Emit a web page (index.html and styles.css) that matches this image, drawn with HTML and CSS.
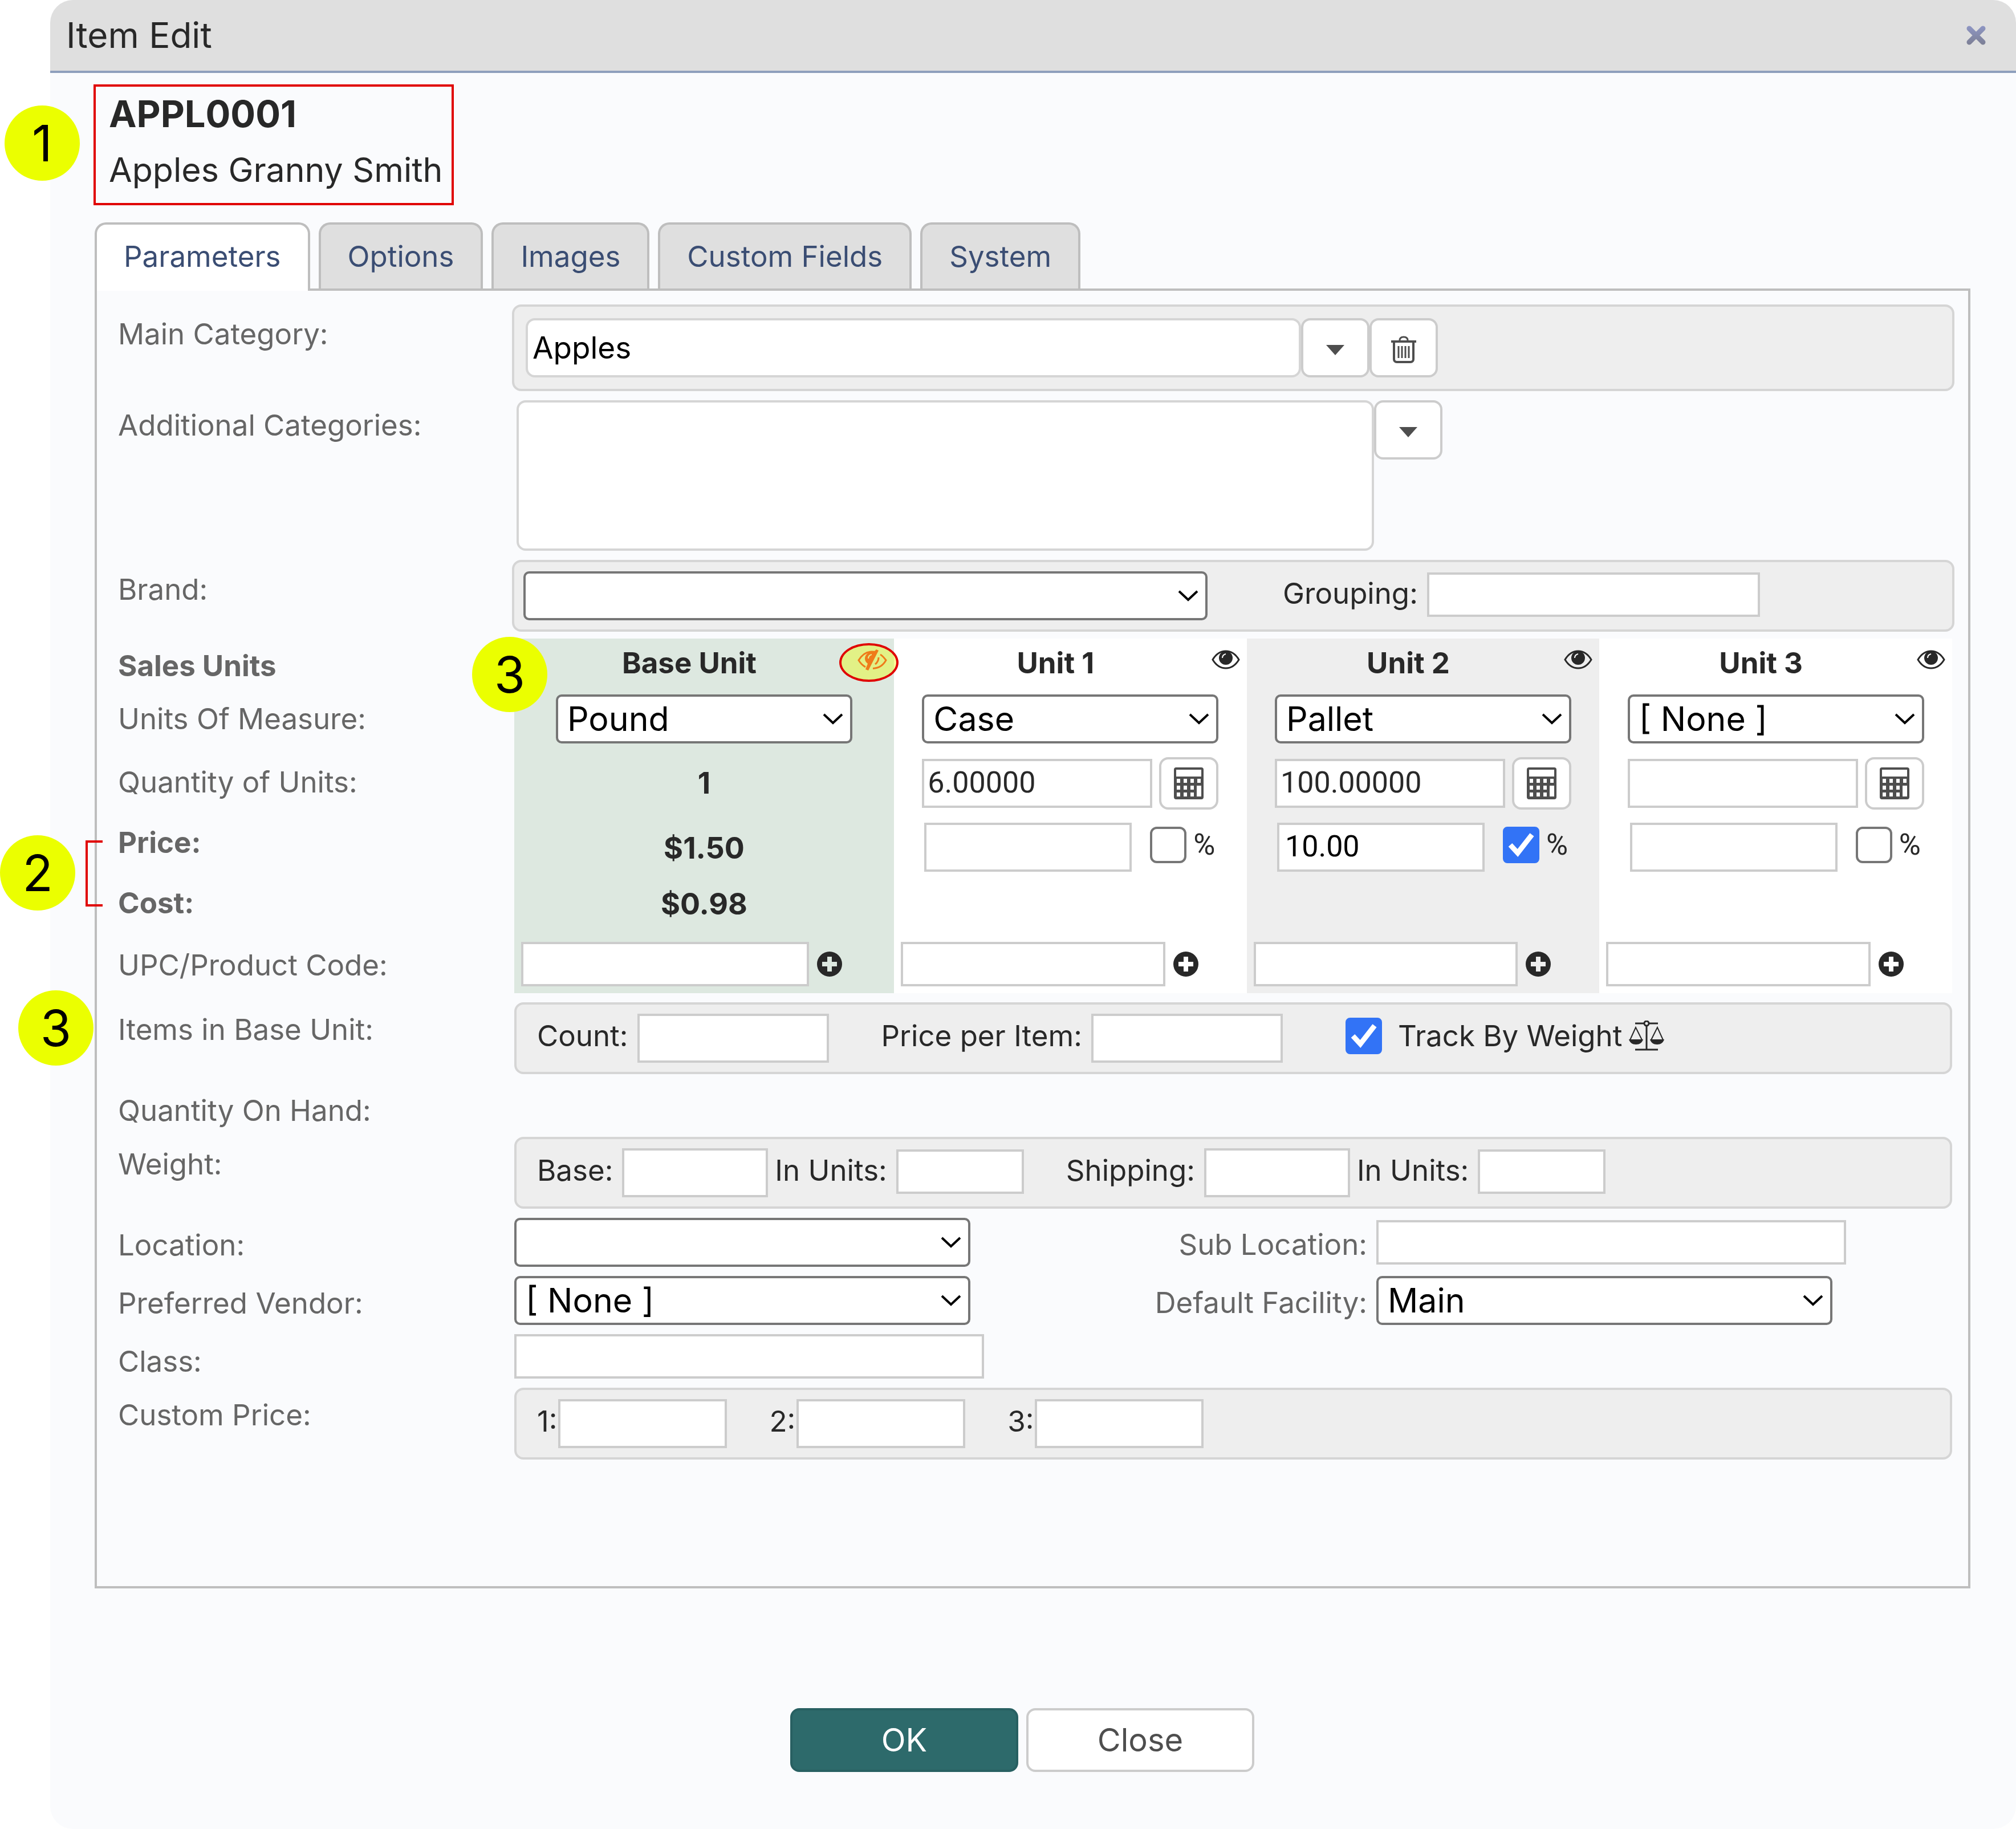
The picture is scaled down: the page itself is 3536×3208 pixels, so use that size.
FILE: index.html
```html
<!DOCTYPE html>
<html lang="en">
<head>
<meta charset="utf-8">
<meta name="viewport" content="width=device-width, initial-scale=1">
<title>Item Edit</title>
<link rel="stylesheet" href="styles.css">
</head>
<body>
<svg class="sprite" aria-hidden="true">
  <defs>
    <linearGradient id="close-fill" gradientUnits="userSpaceOnUse" x1="0" y1="0" x2="0" y2="34">
      <stop offset="0" stop-color="#8e96c4"/>
      <stop offset="1" stop-color="#7c7f94"/>
    </linearGradient>
    <symbol id="i-caret" viewBox="0 0 32 18"><path d="M0 0h32L16 18z" fill="currentColor"/></symbol>
    <symbol id="i-trash" viewBox="0 0 44 48">
      <path d="M15 8c0-4 2-6 7-6s7 2 7 6" fill="none" stroke="currentColor" stroke-width="3"/>
      <path d="M0 8h44v4H0z" fill="currentColor"/>
      <path d="M5 12v29c0 3 2 5 5 5h24c3 0 5-2 5-5V12" fill="none" stroke="currentColor" stroke-width="4"/>
      <path d="M13 18v21M19 18v21M25 18v21M31 18v21" fill="none" stroke="currentColor" stroke-width="3"/>
    </symbol>
    <symbol id="i-eye" viewBox="0 0 50 34">
      <path d="M2 17C8 7 16 2 25 2s17 5 23 15c-6 10-14 15-23 15S8 27 2 17z" fill="none" stroke="currentColor" stroke-width="3"/>
      <circle cx="25" cy="14" r="12" fill="currentColor"/>
      <path d="M19 14c0-4 2-6 6-7" fill="none" stroke="#fff" stroke-width="2"/>
    </symbol>
    <symbol id="i-eye-slash" viewBox="0 0 52 38">
      <path d="M14 31C9 28 5 24 2 19 8 9 16 4 25 4c3 0 5 0 8 1M40 9c4 2 7 6 10 10-5 9-13 14-23 14.500" fill="none" stroke="currentColor" stroke-width="3"/>
      <path d="M29 4c-9-1-16 5-16 12 0 4 2 7 5 9l-4 10 5 2L37 2l-4-2z" fill="currentColor"/>
      <path d="M19 16c0-4 2-6 6-7" fill="none" stroke="#e2ef8c" stroke-width="2"/>
      <path d="M37 14c0 6-2 9-6 12" fill="none" stroke="currentColor" stroke-width="3"/>
    </symbol>
    <symbol id="i-calc" viewBox="0 0 52 56">
      <path fill="currentColor" fill-rule="evenodd" d="M4 0h44a4 4 0 0 1 4 4v48a4 4 0 0 1-4 4H4a4 4 0 0 1-4-4V4a4 4 0 0 1 4-4zM4 4v12h44V4zM5 20v7h6v-7zM17 20v7h6v-7zM29 20v7h6v-7zM41 20v7h6v-7zM5 32v7h6v-7zM17 32v7h6v-7zM29 32v7h6v-7zM40 32v19h8V32zM5 44v7h6v-7zM17 44v7h6v-7zM29 44v7h6v-7z"/>
    </symbol>
    <symbol id="i-plus" viewBox="0 0 44 44">
      <path fill="currentColor" fill-rule="evenodd" d="M22 0a22 22 0 1 0 0 44 22 22 0 0 0 0-44zM18 9h8v9h9v8h-9v9h-8v-9H9v-8h9z"/>
    </symbol>
    <symbol id="i-scales" viewBox="0 0 62 54">
      <g fill="none" stroke="currentColor" stroke-width="3">
        <path d="M31 8v42M11 5h16M35 5h16M11 51h40"/>
        <circle cx="31" cy="5" r="4"/>
        <path d="M12 12L2 34h21zM50 12L39 34h21z" stroke-width="2"/>
      </g>
      <path d="M0 33h25c-2 6-6 9-12.500 9S2 39 0 33zM37 33h25c-2 6-6 9-12.500 9S39 39 37 33z" fill="currentColor"/>
    </symbol>
  </defs>
</svg>

<main class="dialog">
  <header class="dialog-head">
    <h1 class="dialog-title">Item Edit</h1>
    <button class="dialog-close" type="button" aria-label="Close dialog">
      <svg viewBox="0 0 34 34" width="34" height="34"><path d="M5 5l24 24M29 5L5 29" fill="none" stroke="url(#close-fill)" stroke-width="9" stroke-linecap="round"/></svg>
    </button>
  </header>

  <form class="dialog-body">
    <section class="item-head">
      <span class="badge badge-head">1</span>
      <div class="item-box">
        <strong class="item-code">APPL0001</strong>
        <span class="item-name">Apples Granny Smith</span>
      </div>
    </section>

    <div class="tabs" role="tablist">
      <button type="button" class="tab tab-active" role="tab" aria-selected="true">Parameters</button>
      <button type="button" class="tab" role="tab">Options</button>
      <button type="button" class="tab" role="tab">Images</button>
      <button type="button" class="tab" role="tab">Custom Fields</button>
      <button type="button" class="tab" role="tab">System</button>
    </div>

    <section class="panel">
      <div class="row">
        <label class="row-label label-low" for="main-category">Main Category:</label>
        <div class="group group-tall">
          <input class="picker" id="main-category" type="text" value="Apples">
          <button class="icon-btn" type="button" aria-label="Choose category"><svg class="caret"><use href="#i-caret"/></svg></button>
          <button class="icon-btn" type="button" aria-label="Clear category"><svg class="trash"><use href="#i-trash"/></svg></button>
        </div>
      </div>

      <div class="row">
        <label class="row-label label-high" for="more-categories">Additional Categories:</label>
        <div class="area-wrap">
          <textarea class="area" id="more-categories"></textarea>
          <button class="icon-btn" type="button" aria-label="Choose categories"><svg class="caret"><use href="#i-caret"/></svg></button>
        </div>
      </div>

      <div class="row">
        <label class="row-label label-low" for="brand">Brand:</label>
        <div class="group group-brand">
          <select class="select select-brand" id="brand"><option></option></select>
          <label for="grouping" class="lead-grouping">Grouping:</label>
          <input class="field field-short field-grouping" id="grouping" type="text">
        </div>
      </div>

      <div class="sales">
        <table class="units">
          <colgroup><col class="col-label"><col class="col-base"><col><col><col></colgroup>
          <thead>
            <tr class="r-head">
              <th scope="col" class="row-th">Sales Units</th>
              <th scope="col" class="base"><span class="unit-head">Base Unit<span class="eye-mark"><svg class="eye-slash"><use href="#i-eye-slash"/></svg></span></span></th>
              <th scope="col" class="plain"><span class="unit-head">Unit 1<svg class="eye"><use href="#i-eye"/></svg></span></th>
              <th scope="col" class="alt"><span class="unit-head">Unit 2<svg class="eye"><use href="#i-eye"/></svg></span></th>
              <th scope="col" class="plain"><span class="unit-head">Unit 3<svg class="eye"><use href="#i-eye"/></svg></span></th>
            </tr>
          </thead>
          <tbody>
            <tr class="r-uom">
              <th scope="row">Units Of Measure:</th>
              <td class="base"><select class="select unit-line" aria-label="Base unit of measure"><option>Pound</option></select></td>
              <td class="plain"><select class="select unit-line" aria-label="Unit 1 of measure"><option>Case</option></select></td>
              <td class="alt"><select class="select unit-line" aria-label="Unit 2 of measure"><option>Pallet</option></select></td>
              <td class="plain"><select class="select unit-line" aria-label="Unit 3 of measure"><option>[ None ]</option></select></td>
            </tr>
            <tr class="r-qty">
              <th scope="row">Quantity of Units:</th>
              <td class="base value">1</td>
              <td class="plain"><div class="unit-line"><input class="field qty" type="text" value="6.00000" aria-label="Unit 1 quantity"><button class="calc-btn" type="button" aria-label="Calculate"><svg class="calc"><use href="#i-calc"/></svg></button></div></td>
              <td class="alt"><div class="unit-line"><input class="field qty" type="text" value="100.00000" aria-label="Unit 2 quantity"><button class="calc-btn" type="button" aria-label="Calculate"><svg class="calc"><use href="#i-calc"/></svg></button></div></td>
              <td class="plain"><div class="unit-line"><input class="field qty" type="text" aria-label="Unit 3 quantity"><button class="calc-btn" type="button" aria-label="Calculate"><svg class="calc"><use href="#i-calc"/></svg></button></div></td>
            </tr>
            <tr class="r-price">
              <th scope="row" class="strong">Price:</th>
              <td class="base value">$1.50</td>
              <td class="plain"><div class="unit-line"><input class="field price" type="text" aria-label="Unit 1 price"><label class="percent"><input class="check" type="checkbox">%</label></div></td>
              <td class="alt"><div class="unit-line"><input class="field price" type="text" value="10.00" aria-label="Unit 2 price"><label class="percent"><input class="check" type="checkbox" checked>%</label></div></td>
              <td class="plain"><div class="unit-line"><input class="field price" type="text" aria-label="Unit 3 price"><label class="percent"><input class="check" type="checkbox">%</label></div></td>
            </tr>
            <tr class="r-cost">
              <th scope="row" class="strong">Cost:</th>
              <td class="base value">$0.98</td>
              <td class="plain"></td>
              <td class="alt"></td>
              <td class="plain"></td>
            </tr>
            <tr class="r-upc">
              <th scope="row">UPC/Product Code:</th>
              <td class="base"><div class="upc"><input class="field field-short" type="text" aria-label="Base unit product code"><button class="plus-btn" type="button" aria-label="Add code"><svg class="plus"><use href="#i-plus"/></svg></button></div></td>
              <td class="plain"><div class="upc"><input class="field field-short" type="text" aria-label="Unit 1 product code"><button class="plus-btn" type="button" aria-label="Add code"><svg class="plus"><use href="#i-plus"/></svg></button></div></td>
              <td class="alt"><div class="upc"><input class="field field-short" type="text" aria-label="Unit 2 product code"><button class="plus-btn" type="button" aria-label="Add code"><svg class="plus"><use href="#i-plus"/></svg></button></div></td>
              <td class="plain"><div class="upc"><input class="field field-short" type="text" aria-label="Unit 3 product code"><button class="plus-btn" type="button" aria-label="Add code"><svg class="plus"><use href="#i-plus"/></svg></button></div></td>
            </tr>
          </tbody>
        </table>
        <span class="badge badge-base">3</span>
        <span class="badge badge-price">2</span>
        <span class="bracket"></span>
      </div>

      <div class="row">
        <span class="row-label">Items in Base Unit:</span>
        <div class="group inset">
          <label for="count">Count:</label>
          <input class="field w-count" id="count" type="text">
          <label class="lead-item" for="per-item">Price per Item:</label>
          <input class="field w-count" id="per-item" type="text">
          <label class="track"><input class="check" type="checkbox" checked>Track By Weight<svg class="scales"><use href="#i-scales"/></svg></label>
        </div>
        <span class="badge badge-items">3</span>
      </div>

      <div class="row row-text">
        <span class="row-label">Quantity On Hand:</span>
      </div>

      <div class="row">
        <span class="row-label">Weight:</span>
        <div class="group inset">
          <label for="w-base">Base:</label>
          <input class="field w-weight" id="w-base" type="text">
          <label for="w-base-units">In Units:</label>
          <input class="field field-short w-units" id="w-base-units" type="text">
          <label class="lead-shipping" for="w-ship">Shipping:</label>
          <input class="field w-weight" id="w-ship" type="text">
          <label for="w-ship-units">In Units:</label>
          <input class="field field-short w-units" id="w-ship-units" type="text">
        </div>
      </div>

      <div class="row">
        <label class="row-label" for="location">Location:</label>
        <div class="pair inset">
          <select class="select select-wide" id="location"><option></option></select>
          <label class="pair-label" for="sub-location">Sub Location:</label>
          <div class="pair-field"><input class="field field-short field-wide" id="sub-location" type="text"></div>
        </div>
      </div>

      <div class="row">
        <label class="row-label" for="vendor">Preferred Vendor:</label>
        <div class="pair inset">
          <select class="select select-wide" id="vendor"><option>[ None ]</option></select>
          <label class="pair-label" for="facility">Default Facility:</label>
          <div class="pair-field"><select class="select select-wide" id="facility"><option>Main</option></select></div>
        </div>
      </div>

      <div class="row row-text">
        <label class="row-label" for="class">Class:</label>
        <div class="pair inset"><input class="field field-short field-wide" id="class" type="text"></div>
      </div>

      <div class="row">
        <span class="row-label">Custom Price:</span>
        <div class="group inset prices">
          <label class="price-slot"><span class="price-no">1:</span><input class="field w-price" type="text"></label>
          <label class="price-slot"><span class="price-no">2:</span><input class="field w-price" type="text"></label>
          <label class="price-slot"><span class="price-no">3:</span><input class="field w-price" type="text"></label>
        </div>
      </div>
    </section>

    <footer class="actions">
      <button class="btn btn-primary" type="button">OK</button>
      <button class="btn" type="button">Close</button>
    </footer>
  </form>
</main>
</body>
</html>
```

FILE: styles.css
```css
* { box-sizing: border-box; }

body {
  margin: 0;
  background: #fff;
  color: #282828;
  font: 51px/64px Inter, "Liberation Sans", sans-serif;
}

button, input, select, textarea {
  font: inherit;
  color: inherit;
  margin: 0;
}

button { padding: 0; cursor: pointer; }
svg { display: block; }
.sprite { position: absolute; width: 0; height: 0; }

/* Dialog frame */
.dialog {
  margin-left: 88px;
  min-height: 100vh;
  background: #fafbfd;
  border-radius: 40px;
}
.dialog-head {
  display: flex;
  align-items: center;
  justify-content: space-between;
  height: 128px;
  padding: 0 53px 0 28px;
  background: #dfdfdf;
  border-bottom: 4px solid #8e9fbc;
  border-radius: 40px 40px 0 0;
}
.dialog-title { margin: 0; font-size: 62px; line-height: 72px; font-weight: 400; }
.dialog-close { border: 0; background: none; }
.dialog-body { padding: 20px 80px 100px 78px; }

/* Item heading */
.item-head { position: relative; display: flex; padding-bottom: 30px; }
.item-box {
  display: flex;
  flex-direction: column;
  gap: 22px;
  margin-left: -2px;
  padding: 8px 16px 22px 23px;
  border: 4px solid #e00000;
}
.item-code { font-size: 65px; line-height: 80px; font-weight: 700; }
.item-name { font-size: 59px; line-height: 72px; }

/* Callout marks */
.badge {
  position: absolute;
  display: flex;
  align-items: center;
  justify-content: center;
  width: 132px;
  height: 132px;
  border-radius: 50%;
  background: #ebff00;
  color: #000;
  font-size: 88px;
}
.badge-head { left: -158px; top: 37px; }
.badge-base { left: 621px; top: -3px; }
.badge-price { left: -207px; top: 345px; }
.badge-items { left: -175px; top: -21px; }
.bracket {
  position: absolute;
  left: -57px;
  top: 354px;
  width: 30px;
  height: 116px;
  border: 4px solid #e00000;
  border-right: 0;
}

/* Tabs */
.tabs { display: flex; gap: 15px; }
.tab {
  height: 116px;
  padding: 0 47px;
  border: 4px solid #bebebe;
  border-bottom: 0;
  border-radius: 20px 20px 0 0;
  background: #dfdfdf;
  color: #3a4d73;
}
.tab-active { position: relative; height: 120px; margin-bottom: -4px; padding-bottom: 4px; background: #fff; }

/* Form panel */
.panel {
  display: flex;
  flex-direction: column;
  gap: 16px;
  padding: 24px 24px 222px 37px;
  border: 4px solid #bebebe;
}
.row { position: relative; display: grid; grid-template-columns: 691px 1fr; align-items: start; }
.row-text { height: 78px; }
.row-label { padding-top: 16px; color: #666; }
.label-low { padding-top: 20px; }
.label-high { padding-top: 12px; }
.inset { margin: 0 4px; }

.group {
  display: flex;
  align-items: center;
  gap: 12px;
  height: 126px;
  padding: 0 36px;
  border: 4px solid #d5d5d5;
  border-radius: 16px;
  background: #eee;
}
.group-tall { height: 152px; gap: 0; padding: 0 20px; }
.group-brand { padding: 0 16px; }
.group > label { margin-right: 4px; padding-bottom: 8px; }
.group > .field-short { margin-bottom: 4px; }

.picker, .area {
  border: 4px solid #d5d5d5;
  border-radius: 16px;
  background: #fff;
  color: #000;
}
.picker { width: 1360px; height: 104px; padding: 0 8px; font-size: 53px; }
.area-wrap { display: flex; align-items: flex-start; padding-left: 8px; }
.area { display: block; width: 1504px; height: 264px; resize: none; }

.icon-btn, .calc-btn {
  display: flex;
  align-items: center;
  justify-content: center;
  width: 120px;
  height: 104px;
  border: 4px solid #ccc;
  border-radius: 16px;
  background: #fff;
  color: #4e4e4e;
}
.calc-btn { width: 104px; height: 92px; }
.caret { width: 32px; height: 18px; margin-top: 8px; }
.trash { width: 44px; height: 48px; margin-top: 6px; }
.calc { width: 52px; height: 56px; }

.field {
  height: 86px;
  padding: 0 6px 4px;
  border: 4px solid #ccc;
  border-radius: 0;
  background: #fff;
}
.field-short { height: 78px; }
.field-wide { width: 824px; }
.field-grouping { width: 584px; }

.select {
  appearance: none;
  height: 86px;
  padding: 0 60px 0 16px;
  border: 4px solid #767676;
  border-radius: 10px;
  background: #fff url("data:image/svg+xml,%3Csvg xmlns='http://www.w3.org/2000/svg' width='36' height='20'%3E%3Cpath d='M2 2l16 15L34 2' fill='none' stroke='%23000' stroke-width='4'/%3E%3C/svg%3E") no-repeat right 12px center;
  color: #000;
  font-size: 59px;
}
.select-brand { width: 1200px; }
.select-wide { width: 800px; }

.check {
  appearance: none;
  width: 64px;
  height: 64px;
  border: 4px solid #767676;
  border-radius: 12px;
  background: #fff;
}
.check:checked {
  border-color: #3273f6;
  border-radius: 8px;
  background: #3273f6 url("data:image/svg+xml,%3Csvg xmlns='http://www.w3.org/2000/svg' width='64' height='64'%3E%3Cpath d='M13 32l13 14L51 14' fill='none' stroke='%23fff' stroke-width='9'/%3E%3C/svg%3E") no-repeat center;
}

/* Sales units table */
.sales { position: relative; margin: -4px 4px 0 0; }
.units { width: 100%; table-layout: fixed; border-collapse: collapse; }
.units th, .units td { padding: 0; }
.units tbody th { font-weight: 400; text-align: left; color: #666; }
.units tbody .strong { font-weight: 700; }
.units thead .row-th { padding-top: 10px; text-align: left; color: #666; }
.col-label { width: 695px; }
.col-base { width: 666px; }
.base { background: #dde8e0; }
.plain { background: #fff; }
.alt { background: #eee; }
.value { font-size: 52px; font-weight: 700; text-align: center; }
.r-head { height: 86px; }
.r-uom { height: 110px; }
.r-qty { height: 116px; }
.r-price { height: 108px; }
.r-cost { height: 92px; }
.r-upc { height: 110px; }
.units .r-qty th { padding-bottom: 4px; }
.units .r-price th { padding-bottom: 16px; }
.units .r-price .value { padding-top: 4px; }
.units .r-cost th { padding-bottom: 4px; }
.units .r-upc th { padding-top: 12px; }
.units .r-upc td { padding-top: 8px; }

.unit-head { position: relative; display: block; padding-right: 52px; }
.eye { position: absolute; right: 12px; top: 9px; width: 50px; height: 34px; }
.eye-mark {
  position: absolute;
  right: -8px;
  top: -3px;
  display: flex;
  align-items: center;
  justify-content: center;
  width: 104px;
  height: 68px;
  border: 4px solid #e00000;
  border-radius: 50%;
  background: rgba(235, 255, 0, .4);
  color: #ef7b1a;
}
.eye-slash { width: 52px; height: 38px; margin: 0 0 8px 12px; }

.unit-line { display: flex; align-items: center; width: 520px; margin: 0 auto; }
.qty, .price, .percent { font-family: Roboto, "Liberation Sans", sans-serif; font-size: 52px; }
.qty { width: 404px; margin-right: 12px; }
.price { width: 364px; margin: 0 32px 0 4px; padding: 0 10px 4px; color: #000; }
.percent { display: flex; align-items: center; gap: 12px; padding-bottom: 8px; }

.upc { display: flex; align-items: center; gap: 14px; padding: 0 85px 0 12px; }
.upc .field { flex: 1; min-width: 0; }
.base .upc { padding-right: 91px; }
.plus-btn { border: 0; background: none; }
.plus { width: 44px; height: 44px; }

/* Inline field groups */
.w-count { width: 336px; }
.w-weight { width: 256px; }
.w-units { width: 224px; }
.w-price { width: 296px; }
.lead-grouping { margin-left: 120px; }
.lead-item { margin-left: 80px; }
.lead-shipping { margin-left: 62px; }
.track { display: flex; align-items: center; margin-left: 98px; }
.track .check { margin-right: 28px; }
.scales { width: 62px; height: 54px; margin-left: 12px; }
.group.prices { gap: 74px; }
.group > .price-slot { display: flex; align-items: center; margin: 0; padding: 0; }
.price-no { padding: 0 2px 8px 0; }

.pair { display: flex; align-items: center; }
.pair-label { flex: 1; padding: 8px 16px 0 0; text-align: right; color: #666; }
.pair-field { display: flex; width: 1010px; }

/* Footer buttons */
.actions { display: flex; justify-content: center; gap: 14px; margin-top: 210px; padding-right: 36px; }
.btn {
  width: 400px;
  height: 112px;
  border: 4px solid #ccc;
  border-radius: 16px;
  background: #fff;
  color: #4e4e4e;
  font-size: 56px;
}
.btn-primary { border-color: #286062; background: #2d6a6b; color: #fff; }
```
